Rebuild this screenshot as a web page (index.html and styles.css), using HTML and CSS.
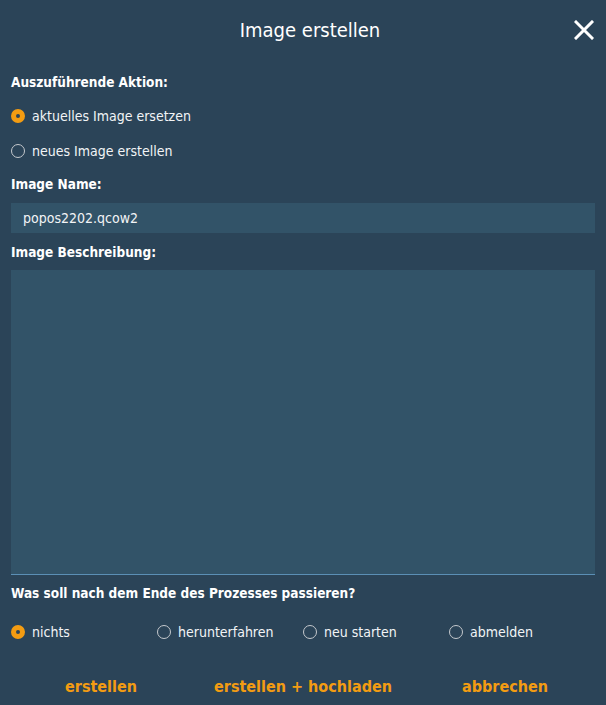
FILE: index.html
```html
<!DOCTYPE html>
<html lang="de">
<head>
<meta charset="utf-8">
<title>Image erstellen</title>
<link rel="stylesheet" href="styles.css">
</head>
<body>
<div class="dialog">
  <header class="head">
    <h1 class="title">Image erstellen</h1>
    <button class="close" aria-label="Schließen">
      <svg width="20" height="20" viewBox="0 0 20 20"><path d="M2 2 L18 18 M18 2 L2 18" stroke="#fff" stroke-width="3" stroke-linecap="square"/></svg>
    </button>
  </header>
  <div class="body">
    <div class="label">Auszuführende Aktion:</div>
    <div class="options">
      <label class="radio"><span class="dot on"></span>aktuelles Image ersetzen</label>
      <label class="radio"><span class="dot"></span>neues Image erstellen</label>
    </div>
    <div class="label l2">Image Name:</div>
    <div class="input">popos2202.qcow2</div>
    <div class="label l3">Image Beschreibung:</div>
    <div class="textarea"></div>
    <div class="label l4">Was soll nach dem Ende des Prozesses passieren?</div>
    <div class="choices">
      <label class="radio"><span class="dot on"></span>nichts</label>
      <label class="radio"><span class="dot"></span>herunterfahren</label>
      <label class="radio"><span class="dot"></span>neu starten</label>
      <label class="radio"><span class="dot"></span>abmelden</label>
    </div>
  </div>
  <footer class="actions">
    <button class="btn">erstellen</button>
    <button class="btn">erstellen + hochladen</button>
    <button class="btn">abbrechen</button>
  </footer>
</div>
</body>
</html>
```
FILE: styles.css
```css
* { box-sizing: border-box; }
html, body { margin: 0; padding: 0; }
body {
  background: #2b4458;
  width: 606px;
  height: 705px;
  overflow: hidden;
  font-family: "DejaVu Sans Condensed", "Roboto", sans-serif;
  color: #fff;
}
.dialog { display: flex; flex-direction: column; height: 705px; }
.head {
  position: relative;
  height: 60px;
  display: flex;
  align-items: center;
  justify-content: center;
  padding-left: 14px;
}
.title { margin: 0; font-weight: normal; font-size: 20px; }
.close {
  position: absolute;
  right: 12px;
  top: 20px;
  background: none;
  border: 0;
  padding: 0;
  width: 20px;
  height: 20px;
  display: flex;
}
.body { padding: 13px 11px 0; display: flex; flex-direction: column; }
.label { font-weight: bold; font-size: 13.5px; height: 18px; line-height: 18px; }
.options { margin-top: 7px; display: flex; flex-direction: column; }
.l2 { margin-top: 7px; }
.l3 { margin-top: 10px; }
.l4 { margin-top: 9px; }
.radio {
  display: flex;
  align-items: center;
  gap: 7px;
  font-size: 14px;
  height: 35px;
  color: #f2f4f6;
}
.dot {
  width: 14px;
  height: 14px;
  border-radius: 50%;
  border: 1.5px solid #c5c9cd;
  flex: none;
}
.dot.on {
  border: 5px solid #f39c12;
  background: #2b4458;
}
.input {
  margin-top: 10px;
  height: 30px;
  background: #325368;
  font-size: 14px;
  line-height: 30px;
  padding-left: 12px;
  color: #f2f4f6;
}
.textarea {
  margin-top: 9px;
  height: 305px;
  background: #325368;
  border-bottom: 1px solid #5b8fb5;
}
.choices {
  margin-top: 20px;
  display: grid;
  grid-template-columns: repeat(4, 146px);
}
.choices .radio { height: 20px; }
.actions {
  margin-top: 29px;
  display: grid;
  grid-template-columns: repeat(3, 1fr);
}
.btn {
  background: none;
  border: 0;
  padding: 0;
  font-family: inherit;
  font-weight: bold;
  font-size: 16px;
  color: #f39c12;
  height: 30px;
}
```
